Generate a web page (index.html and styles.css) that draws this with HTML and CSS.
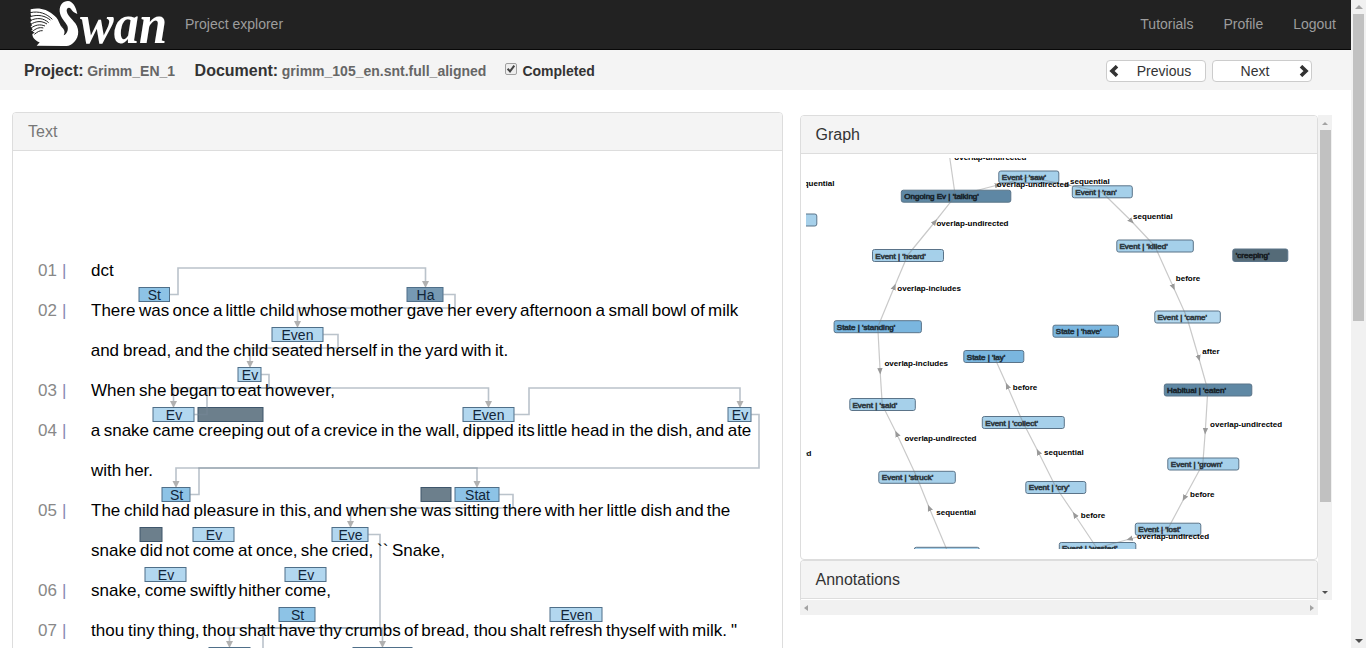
FILE: index.html
```html
<!DOCTYPE html>
<html lang="en">
<head>
<meta charset="utf-8">
<title>Swan</title>
<link rel="stylesheet" href="styles.css">
</head>
<body>
<div class="window">
<div class="page">
  <nav class="navbar">
    <svg class="logo" width="141" height="48" viewBox="28 0 141 48">
      <g transform="scale(.33333)">
        <path fill="#fff" d="M232 42C224 38 216 34 213 27C208 20 200 23 200 32C201 45 216 56 226 70C241 92 236 118 216 132C210 137 202 138 192 138L110 137L119 127C105 122 97 112 97 102L104 98L94 92L98 88L92 80L96 76L91 66L95 62L91 53L94 49L92 42L92 28C118 21 142 29 158 43C165 49 174 56 177 67L183 79C189 82 196 85 202 78C198 67 181 55 179 34C178 15 189 3 204 3C219 4 228 21 232 42Z"/>
        <path fill="none" stroke="#222" stroke-width="3" d="M90 38C118 32 140 41 157 58M90 50C116 42 136 48 151 60M90 62C111 52 131 54 146 68M90 74C110 62 125 62 141 72M91 86C106 74 120 72 135 78M95 96C108 85 118 81 130 84M103 103C112 96 119 91 128 92"/>
        <path fill="#222" d="M182 79C190 82 197 80 202 77C206 88 202 101 191 106C195 99 196 89 182 79Z"/>
      </g>
      <text class="logo-text" x="80" y="42.500" textLength="87" lengthAdjust="spacingAndGlyphs">wan</text>
    </svg>
    <a class="nav-first">Project explorer</a>
    <div class="nav-right"><a>Tutorials</a><a>Profile</a><a>Logout</a></div>
  </nav>
  <header class="docbar">
    <span class="key">Project:</span><span class="value">Grimm_EN_1</span>
    <span class="key key-document">Document:</span><span class="value">grimm_105_en.snt.full_aligned</span>
    <span class="check"><svg width="12" height="12" viewBox="0 0 12 12"><path d="M2.600 5.800L5 8.400L9.300 2.700" fill="none" stroke="#444" stroke-width="2"/></svg></span>
    <span class="completed">Completed</span>
    <div class="pager">
      <button class="btn prev"><svg width="10" height="12" viewBox="0 0 10 12"><path d="M8 1.200L3 6L8 10.800" fill="none" stroke="#333" stroke-width="3.600"/></svg><span>Previous</span></button>
      <button class="btn next"><span>Next</span><svg width="10" height="12" viewBox="0 0 10 12"><path d="M2 1.200L7 6L2 10.800" fill="none" stroke="#333" stroke-width="3.600"/></svg></button>
    </div>
  </header>
  <main class="content">
    <section class="panel text-panel">
      <h2 class="panel-title muted">Text</h2>
      <svg class="annotated" width="769" height="497" viewBox="13 151 769 497">
        <defs>
          <marker id="tip" markerUnits="userSpaceOnUse" markerWidth="8" markerHeight="8" refX="1" refY="4" orient="auto"><path d="M0 .5L7 4L0 7.500Z" fill="#666"/></marker>
        </defs>
        <g class="line-no">
          <text x="38" y="276">01</text><text x="38" y="316">02</text><text x="38" y="396">03</text><text x="38" y="436">04</text><text x="38" y="516">05</text><text x="38" y="596">06</text><text x="38" y="636">07</text>
        </g>
        <g class="line-bar">
          <text x="62" y="276">|</text><text x="62" y="316">|</text><text x="62" y="396">|</text><text x="62" y="436">|</text><text x="62" y="516">|</text><text x="62" y="596">|</text><text x="62" y="636">|</text>
        </g>
        <g class="boxes">
          <g class="state"><rect x="139" y="287.500" width="30.500" height="14"/><rect x="162" y="487.500" width="28" height="14"/><rect x="455" y="487.500" width="44" height="14"/><rect x="279" y="607.500" width="36" height="14"/></g>
          <g class="habit"><rect x="407" y="287.500" width="36" height="14"/></g>
          <g class="event"><rect x="272" y="327.500" width="51" height="14"/><rect x="238" y="367.500" width="23" height="14"/><rect x="153" y="407.500" width="41" height="14"/><rect x="463" y="407.500" width="51" height="14"/><rect x="728" y="407.500" width="23" height="14"/><rect x="193" y="527.500" width="41" height="14"/><rect x="332" y="527.500" width="36" height="14"/><rect x="145" y="567.500" width="41" height="14"/><rect x="285" y="567.500" width="41" height="14"/><rect x="550" y="607.500" width="52" height="14"/></g>
          <g class="dark"><rect x="198" y="407.500" width="65" height="14"/><rect x="421" y="487.500" width="30" height="14"/><rect x="140" y="527.500" width="22" height="14"/></g>
          <g class="event"><rect x="209" y="647.500" width="41" height="14"/><rect x="353" y="647.500" width="59" height="14"/></g>
        </g>
        <g class="box-labels">
          <text x="154.300" y="300">St</text><text x="425.500" y="300">Ha</text><text x="297.500" y="340">Even</text><text x="250" y="380">Ev</text><text x="174" y="420">Ev</text><text x="488.500" y="420">Even</text><text x="740" y="420">Ev</text><text x="176.500" y="500">St</text><text x="477.500" y="500">Stat</text><text x="214" y="540">Ev</text><text x="350.500" y="540">Eve</text><text x="166" y="580">Ev</text><text x="306" y="580">Ev</text><text x="297.500" y="620">St</text><text x="576.500" y="620">Even</text>
        </g>
        <g class="links">
          <path d="M169.500 294.500H178V268H425.500V282"/>
          <path d="M443 294.500H455V308H297.500V322"/>
          <path d="M323 334.500H338V348H250V362"/>
          <path d="M261 374.500H269V388H173.500V402"/>
          <path d="M194 414.500H207V388H488.500V402"/>
          <path d="M514 414.500H529V388H740V402"/>
          <path d="M751 414.500H759V468H176V482"/>
          <path d="M190 494.500H199V468H477V482"/>
          <path d="M499 494.500H513V508H350.500V522"/>
          <path d="M368 534.500H380V628H229.500V642"/>
          <path d="M263 660V628H382.500V642"/>
        </g>
        <g class="words">
          <text y="276"><tspan x="91">dct</tspan></text>
          <text y="316"><tspan x="91">There</tspan> <tspan x="139">was</tspan> <tspan x="172.500">once</tspan> <tspan x="213">a</tspan> <tspan x="225.500">little</tspan> <tspan x="259.700">child</tspan> <tspan x="298">whose</tspan> <tspan x="350">mother</tspan> <tspan x="406.700">gave</tspan> <tspan x="447.300">her</tspan> <tspan x="475.500">every</tspan> <tspan x="520">afternoon</tspan> <tspan x="595.500">a</tspan> <tspan x="608.500">small</tspan> <tspan x="651.700">bowl</tspan> <tspan x="690.500">of</tspan> <tspan x="708">milk</tspan></text>
          <text y="356"><tspan x="90.700">and</tspan> <tspan x="123">bread,</tspan> <tspan x="174.700">and</tspan> <tspan x="206">the</tspan> <tspan x="233.300">child</tspan> <tspan x="271.700">seated</tspan> <tspan x="326">herself</tspan> <tspan x="380.500">in</tspan> <tspan x="398">the</tspan> <tspan x="425">yard</tspan> <tspan x="461.300">with</tspan> <tspan x="495">it.</tspan></text>
          <text y="396"><tspan x="91">When</tspan> <tspan x="139">she</tspan> <tspan x="170">began</tspan> <tspan x="221">to</tspan> <tspan x="237.700">eat</tspan> <tspan x="265" textLength="70">however,</tspan></text>
          <text y="436"><tspan x="90.700">a</tspan> <tspan x="103.700">snake</tspan> <tspan x="152.700">came</tspan> <tspan x="198.500">creeping</tspan> <tspan x="266.700">out</tspan> <tspan x="294.300">of</tspan> <tspan x="311">a</tspan> <tspan x="323.700">crevice</tspan> <tspan x="381">in</tspan> <tspan x="398">the</tspan> <tspan x="425.700">wall,</tspan> <tspan x="462.700">dipped</tspan> <tspan x="517.700">its</tspan> <tspan x="537">little</tspan> <tspan x="571">head</tspan> <tspan x="611.700">in</tspan> <tspan x="629.700">the</tspan> <tspan x="656.700">dish,</tspan> <tspan x="695.700">and</tspan> <tspan x="727.700">ate</tspan></text>
          <text y="476"><tspan x="91">with</tspan> <tspan x="124.700">her.</tspan></text>
          <text y="516"><tspan x="91">The</tspan> <tspan x="124">child</tspan> <tspan x="161.500">had</tspan> <tspan x="193.500">pleasure</tspan> <tspan x="262">in</tspan> <tspan x="280">this,</tspan> <tspan x="313.500">and</tspan> <tspan x="346">when</tspan> <tspan x="389.700">she</tspan> <tspan x="421">was</tspan> <tspan x="454.700">sitting</tspan> <tspan x="503">there</tspan> <tspan x="544.700">with</tspan> <tspan x="578.500">her</tspan> <tspan x="606.500">little</tspan> <tspan x="640.700">dish</tspan> <tspan x="675.300">and</tspan> <tspan x="706.700">the</tspan></text>
          <text y="556"><tspan x="91">snake</tspan> <tspan x="140">did</tspan> <tspan x="165.500">not</tspan> <tspan x="192.700">come</tspan> <tspan x="238">at</tspan> <tspan x="256">once,</tspan> <tspan x="300.700">she</tspan> <tspan x="331.700">cried,</tspan> <tspan x="377">``</tspan> <tspan x="392">Snake,</tspan></text>
          <text y="596"><tspan x="91">snake,</tspan> <tspan x="144.700">come</tspan> <tspan x="189.700">swiftly</tspan> <tspan x="238.500">hither</tspan> <tspan x="284.700">come,</tspan></text>
          <text y="636"><tspan x="91">thou</tspan> <tspan x="128">tiny</tspan> <tspan x="158">thing,</tspan> <tspan x="202.500">thou</tspan> <tspan x="239">shalt</tspan> <tspan x="278.700">have</tspan> <tspan x="319">thy</tspan> <tspan x="345">crumbs</tspan> <tspan x="404">of</tspan> <tspan x="421.300">bread,</tspan> <tspan x="473.700">thou</tspan> <tspan x="510">shalt</tspan> <tspan x="549.500">refresh</tspan> <tspan x="606">thyself</tspan> <tspan x="658.700">with</tspan> <tspan x="692">milk.</tspan> <tspan x="731">"</tspan></text>
        </g>
      </svg>
    </section>
    <aside class="side">
      <div class="side-view">
        <div class="side-panels">
          <section class="panel graph-panel">
            <h2 class="panel-title">Graph</h2>
            <svg class="graph" width="506" height="391" viewBox="806.200 158 506 391">
              <defs>
                <marker id="mid" markerUnits="userSpaceOnUse" markerWidth="8" markerHeight="6" refX="3" refY="3" orient="auto"><path d="M0 .3L6.500 3L0 5.700Z" fill="#999"/></marker>
              </defs>
              <g class="nodes">
                <g class="ev"><rect x="999" y="171" width="60" height="12" rx="2"/><rect x="757" y="214" width="60" height="12" rx="2"/><rect x="872.700" y="249.500" width="71" height="12" rx="2"/><rect x="1072.500" y="185.800" width="60" height="12" rx="2"/><rect x="1117" y="240" width="76.500" height="12" rx="2"/><rect x="850" y="398.500" width="65.500" height="12" rx="2"/><rect x="982.500" y="416.500" width="82" height="12" rx="2"/><rect x="879" y="471.300" width="76.500" height="12" rx="2"/><rect x="1026" y="481.500" width="60" height="12" rx="2"/><rect x="1168" y="458" width="71" height="12" rx="2"/><rect x="1135.500" y="523.200" width="65.500" height="12" rx="2"/><rect x="1059.500" y="542.500" width="76.500" height="12" rx="2"/><rect x="914.500" y="547.300" width="65" height="12" rx="2"/></g>
                <g class="ev light"><rect x="1155" y="311" width="65.500" height="12" rx="2"/></g>
                <g class="st"><rect x="834.300" y="320.700" width="87.300" height="12" rx="2"/><rect x="964" y="350.500" width="60" height="12" rx="2"/><rect x="1053.200" y="325.200" width="65.500" height="12" rx="2"/></g>
                <g class="hb"><rect x="901.500" y="190.200" width="109.500" height="12" rx="2"/><rect x="1164.500" y="384" width="87.500" height="12" rx="2"/></g>
                <g class="dk"><rect x="1233" y="249" width="55" height="12.500" rx="2"/></g>
              </g>
              <g class="edges">
                <path d="M950 158L955.500 196"/>
                <path d="M955.500 196L998 185L1029 177"/>
                <path d="M1029 177L1068 185L1102 192"/>
                <path d="M908 255L935 222L955.500 196"/>
                <path d="M878 327L894.500 287L908 255"/>
                <path d="M878 327L880.300 371L882.500 405"/>
                <path d="M917 477L897 434L882.500 405"/>
                <path d="M948 552L929.500 508L917 477"/>
                <path d="M1023 422L1007.500 386L994 356"/>
                <path d="M1056 487L1038.500 452L1023 422"/>
                <path d="M1097 548L1075 515L1056 487"/>
                <path d="M1168 529L1130 539L1097 548"/>
                <path d="M1203 464L1184.500 498L1168 529"/>
                <path d="M1208 390L1205.500 431L1203 464"/>
                <path d="M1187 317L1199 358L1208 390"/>
                <path d="M1155 246L1173.500 287L1187 317"/>
                <path d="M1102 192L1131.500 221L1155 246"/>
              </g>
              <g class="node-labels">
                <text x="1002" y="180.300">Event | 'saw'</text><text x="904.500" y="199.300">Ongoing Ev | 'talking'</text><text x="875.500" y="259.300">Event | 'heard'</text><text x="1075.500" y="195.300">Event | 'ran'</text><text x="1119.700" y="249.300">Event | 'killed'</text><text x="1236" y="258.300">'creeping'</text><text x="837" y="330.300">State | 'standing'</text><text x="967" y="360.300">State | 'lay'</text><text x="1056" y="334.300">State | 'have'</text><text x="852.700" y="408.300">Event | 'said'</text><text x="985.500" y="426.300">Event | 'collect'</text><text x="1157.700" y="320.300">Event | 'came'</text><text x="1167.300" y="393.300">Habitual | 'eaten'</text><text x="882" y="480.300">Event | 'struck'</text><text x="1029" y="490.300">Event | 'cry'</text><text x="1171" y="467.300">Event | 'grown'</text><text x="1138.500" y="532.300">Event | 'lost'</text><text x="1062.300" y="551.300">Event | 'wasted'</text>
              </g>
              <g class="edge-labels">
                <text x="954.500" y="160">overlap-undirected</text><text x="795" y="186">sequential</text><text x="997" y="187">overlap-undirected</text><text x="936.700" y="226">overlap-undirected</text><text x="897.500" y="291">overlap-includes</text><text x="1070.300" y="184">sequential</text><text x="1133.300" y="219">sequential</text><text x="1176" y="281">before</text><text x="884.700" y="366">overlap-includes</text><text x="1013" y="390">before</text><text x="904.700" y="441">overlap-undirected</text><text x="739.700" y="456">overlap-undirected</text><text x="1202.500" y="354">after</text><text x="1210.300" y="427">overlap-undirected</text><text x="1044.300" y="455">sequential</text><text x="1190.300" y="497">before</text><text x="1081" y="518">before</text><text x="936.500" y="515">sequential</text><text x="1137.300" y="539">overlap-undirected</text>
              </g>
            </svg>
          </section>
          <section class="panel notes-panel"><h2 class="panel-title">Annotations</h2></section>
        </div>
        <div class="vbar inner"><i class="arrow up"></i><i class="thumb"></i><i class="arrow down"></i></div>
      </div>
      <div class="hbar"><i class="arrow left"></i><i class="arrow right"></i></div>
    </aside>
  </main>
</div>
<div class="vbar outer"><i class="arrow up"></i><i class="thumb"></i><i class="arrow down"></i></div>
</div>
</body>
</html>
```
FILE: styles.css
```css
* { box-sizing: border-box; }
body { margin: 0; overflow: hidden; background: #fff; color: #333; font: 14px/20px "Liberation Sans", Arial, sans-serif; }
.window { display: flex; width: 1366px; height: 648px; overflow: hidden; }
.page { width: 1351px; height: 648px; overflow: hidden; }

.navbar { display: flex; height: 50px; padding: 0 15px 0 28px; background: #222; border-bottom: 1px solid #080808; color: #9d9d9d; }
.logo { display: block; flex: none; overflow: visible; }
.logo-text { font: italic bold 58px/1 "Liberation Serif", serif; fill: #fff; }
.nav-first { padding: 14px 0 0 16px; }
.nav-right { display: flex; gap: 30px; margin-left: auto; padding-top: 14px; }

.docbar { display: flex; height: 40px; padding: 0 39px 0 24px; background: #f4f4f4; font-weight: bold; line-height: 42px; }
.key { font-size: 16px; }
.key-document { margin-left: 19.5px; }
.value { margin-left: 3.6px; color: #666; }
.check { width: 12px; height: 12px; margin: 13px 0 0 19px; border: 1px solid #a0a0a0; border-radius: 2px; background: #eee; }
.check svg { display: block; margin: -1px; }
.completed { margin-left: 5px; }
.pager { display: flex; gap: 6px; margin: 10px 0 0 auto; }
.btn { display: flex; align-items: center; width: 100px; height: 22px; padding: 0 2px; background: #fff; border: 1px solid #ccc; border-radius: 4px; font: 14px/20px "Liberation Sans", Arial, sans-serif; color: #333; }
.btn span { flex: 1; text-align: center; }
.prev span { padding-left: 6px; }
.next span { padding-right: 4px; }

.content { display: flex; align-items: flex-start; gap: 16.5px; padding: 22px 0 0 12px; }
.panel { border: 1px solid #ddd; border-radius: 4px; background: #fff; overflow: hidden; }
.panel-title { height: 38px; margin: 0; padding: 0 15px; background: #f4f4f4; border-bottom: 1px solid #ddd; font-size: 16px; font-weight: normal; line-height: 37px; }
.muted { color: #777; }
.text-panel { flex: none; width: 771px; height: 560px; }
.annotated { display: block; font-size: 17px; }
.line-no { fill: #888; }
.line-bar { fill: #8888b0; }
.boxes rect { stroke: #4f6f89; stroke-width: 1; }
.boxes .state { fill: #8dc3e6; }
.boxes .habit { fill: #7699b3; }
.boxes .event { fill: #b2d7ef; }
.boxes .dark { fill: #6c7f8c; }
.boxes .dark rect { stroke: #3f566b; }
.box-labels { font-size: 14px; text-anchor: middle; fill: #12263a; }
.links path { fill: none; stroke: #778898; stroke-width: 1.6; opacity: .5; marker-end: url(#tip); }
.words { fill: #000; }

.side { width: 532px; margin-top: 3px; }
.side-view { display: flex; height: 485px; overflow: hidden; }
.side-panels { width: 518px; }
.graph-panel { height: 445px; }
.graph { display: block; margin: 4px 0 0 5px; font-size: 8px; overflow: hidden; }
.notes-panel { height: 40px; border-bottom: 0; border-radius: 4px 4px 0 0; }
.nodes rect { stroke: #5b7489; stroke-width: 1; }
.nodes .ev { fill: #a6d0ea; }
.nodes .light { fill: #b2d7ee; }
.nodes .st { fill: #7ab6df; }
.nodes .hb { fill: #5f88a4; }
.nodes .dk { fill: #556b78; }
.edges path { fill: none; stroke: #777; stroke-width: 1.2; stroke-opacity: .4; marker-mid: url(#mid); }
.node-labels { fill: #000; stroke: #000; stroke-width: .7; opacity: .7; }
.edge-labels { fill: #000; font-weight: bold; }

.vbar { display: flex; flex-direction: column; align-items: center; background: #f1f1f1; }
.vbar .thumb { display: block; width: 11px; background: #c1c1c1; }
.outer { width: 15px; height: 648px; padding: 5px 0; }
.outer .thumb { height: 307px; margin-top: 5px; }
.inner { width: 14px; height: 485px; padding: 7px 0 6px 1px; }
.inner .thumb { height: 372px; margin-top: 5px; }
.hbar { display: flex; justify-content: space-between; align-items: center; width: 518px; height: 15px; padding: 0 4px; background: #f1f1f1; }
.arrow { display: block; width: 0; height: 0; border: 3px solid transparent; }
.up { border-top: 0; border-bottom-color: #a3a3a3; border-width: 0 3px 3px; }
.down { margin-top: auto; border-width: 3px 3px 0; border-top-color: #505050; }
.left { border-width: 3px 4px 3px 0; border-right-color: #a3a3a3; }
.right { border-width: 3px 0 3px 4px; border-left-color: #a3a3a3; }
.outer .up { border-width: 0 4px 4px; }
.outer .down { border-width: 4px 4px 0; }
```
